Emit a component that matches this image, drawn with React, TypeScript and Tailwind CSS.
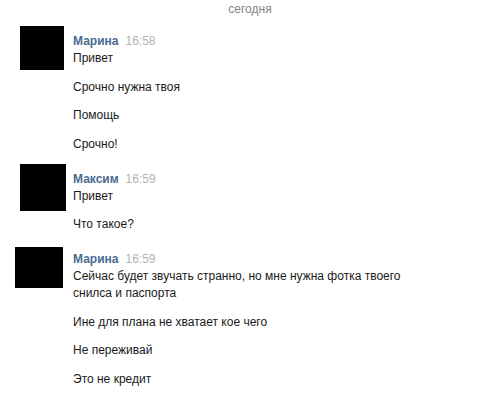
type Group = {
  name: string;
  time: string;
  wrap: string;
  avatar: string;
  head: string;
  messages: string[];
};

const groups: Group[] = [
  {
    name: 'Марина',
    time: '16:58',
    wrap: 'mt-[25px]',
    avatar: 'ml-[20px] w-[44px] h-[44px]',
    head: 'pt-[7px]',
    messages: ['Привет', 'Срочно нужна твоя', 'Помощь', 'Срочно!'],
  },
  {
    name: 'Максим',
    time: '16:59',
    wrap: 'mt-[11.5px]',
    avatar: 'ml-[20px] w-[46px] h-[47px]',
    head: 'pt-[6.5px]',
    messages: ['Привет', 'Что такое?'],
  },
  {
    name: 'Марина',
    time: '16:59',
    wrap: 'mt-[13.5px]',
    avatar: 'ml-[15px] w-[48px] h-[41px]',
    head: 'pt-[4.5px]',
    messages: [
      'Сейчас будет звучать странно, но мне нужна фотка твоего снилса и паспорта',
      'Ине для плана не хватает кое чего',
      'Не переживай',
      'Это не кредит',
    ],
  },
];

export default function App() {
  return (
    <div className="w-[500px] h-[403px] bg-white overflow-hidden text-[12px] text-[#1a1a1a] font-['Liberation_Sans',Arial,sans-serif]">
      <div className="text-center text-[#858585] leading-[16px] pt-[1px] h-[0px]">сегодня</div>
      <div className="flex flex-col">
        {groups.map((g, i) => (
          <div key={i} className={`flex ${g.wrap}`}>
            {/* avatar column */}
            <div className="w-[73px] shrink-0">
              <div className={`bg-black ${g.avatar}`} />
            </div>
            <div className="flex-1">
              <div className={`flex items-baseline gap-[7px] leading-[17px] ${g.head}`}>
                <span className="font-bold text-[#4a6a90]">{g.name}</span>
                <span className="text-[#b3b3b3]">{g.time}</span>
              </div>
              <div className="flex flex-col gap-[11.5px]">
                {g.messages.map((m, j) => (
                  <div key={j} className="leading-[17px] max-w-[330px]">{m}</div>
                ))}
              </div>
            </div>
          </div>
        ))}
      </div>
    </div>
  );
}
